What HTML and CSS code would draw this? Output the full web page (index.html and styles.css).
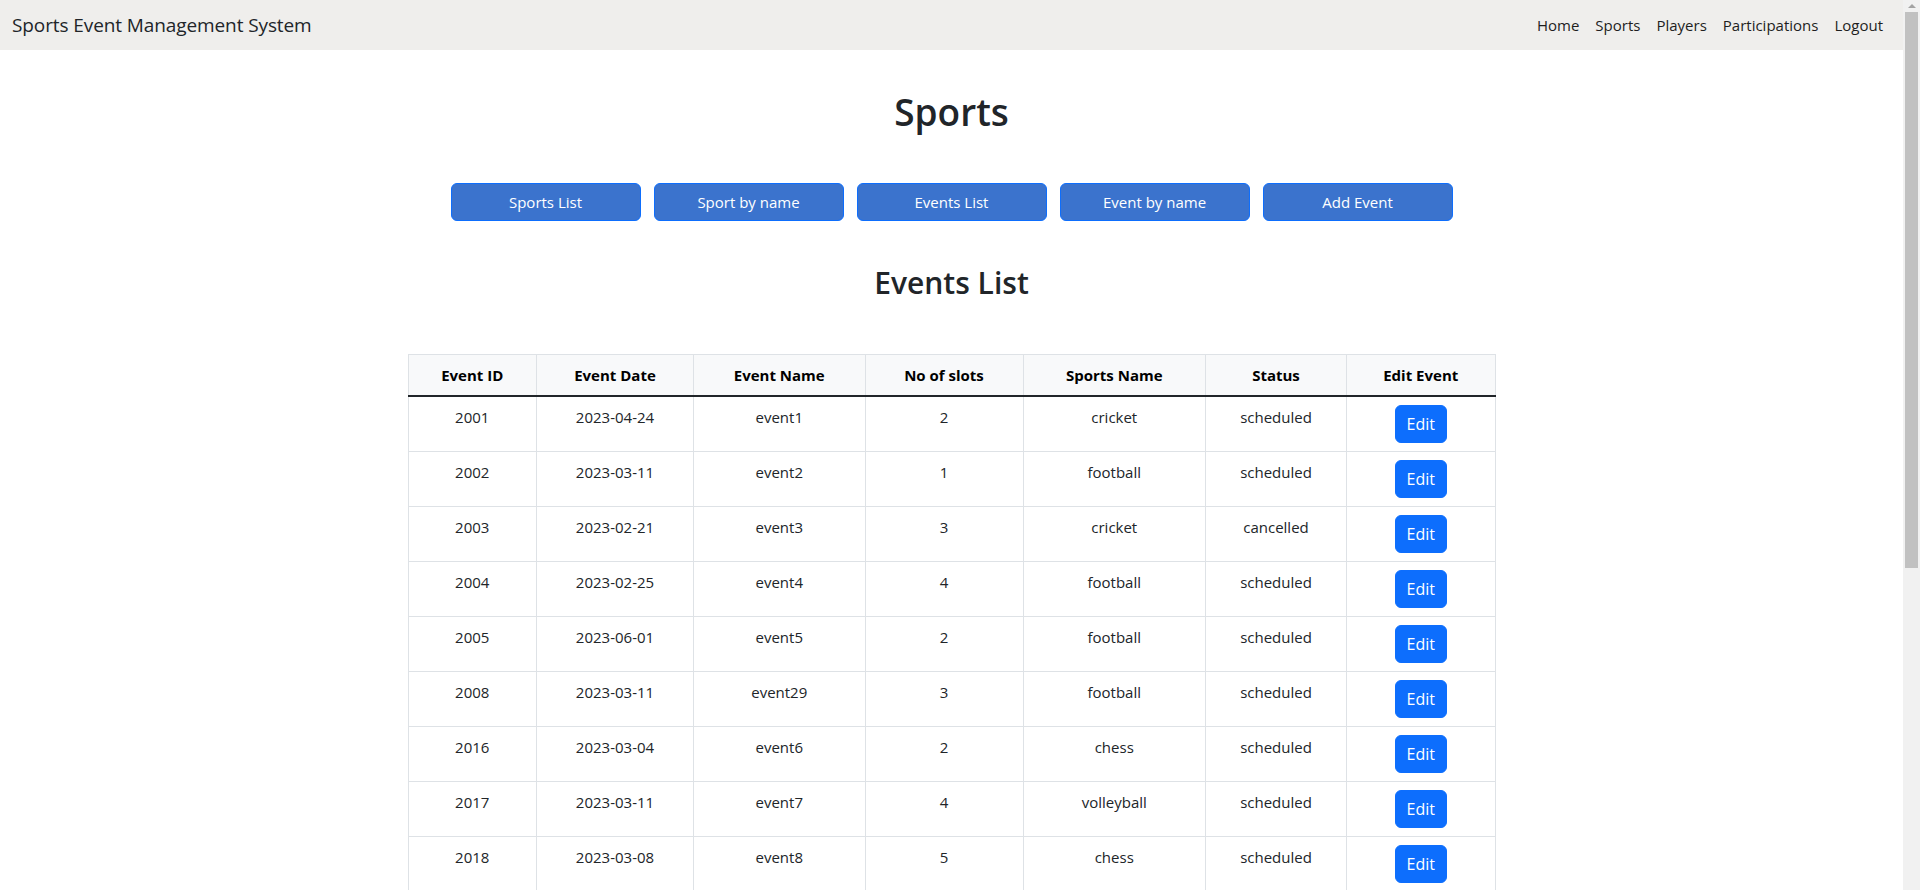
FILE: index.html
```html
<!DOCTYPE html>
<html lang="en">
<head>
<meta charset="utf-8">
<title>Sports Event Management System</title>
<link rel="stylesheet" href="styles.css">
</head>
<body>
<div class="viewport">
  <div class="page">
    <nav class="navbar">
      <span class="brand">Sports Event Management System</span>
      <ul class="nav-links">
        <li><a href="#">Home</a></li>
        <li><a href="#">Sports</a></li>
        <li><a href="#">Players</a></li>
        <li><a href="#">Participations</a></li>
        <li><a href="#">Logout</a></li>
      </ul>
    </nav>
    <main class="content">
      <h1 class="title">Sports</h1>
      <div class="actions">
        <button class="action-btn">Sports List</button>
        <button class="action-btn">Sport by name</button>
        <button class="action-btn">Events List</button>
        <button class="action-btn">Event by name</button>
        <button class="action-btn">Add Event</button>
      </div>
      <h2 class="subtitle">Events List</h2>
      <table class="events">
        <colgroup>
          <col class="c-id"><col class="c-date"><col class="c-name"><col class="c-slots"><col class="c-sport"><col class="c-status"><col class="c-edit">
        </colgroup>
        <thead>
          <tr><th>Event ID</th><th>Event Date</th><th>Event Name</th><th>No of slots</th><th>Sports Name</th><th>Status</th><th>Edit Event</th></tr>
        </thead>
        <tbody>
          <tr><td>2001</td><td>2023-04-24</td><td>event1</td><td>2</td><td>cricket</td><td>scheduled</td><td><button class="edit-btn">Edit</button></td></tr>
          <tr><td>2002</td><td>2023-03-11</td><td>event2</td><td>1</td><td>football</td><td>scheduled</td><td><button class="edit-btn">Edit</button></td></tr>
          <tr><td>2003</td><td>2023-02-21</td><td>event3</td><td>3</td><td>cricket</td><td>cancelled</td><td><button class="edit-btn">Edit</button></td></tr>
          <tr><td>2004</td><td>2023-02-25</td><td>event4</td><td>4</td><td>football</td><td>scheduled</td><td><button class="edit-btn">Edit</button></td></tr>
          <tr><td>2005</td><td>2023-06-01</td><td>event5</td><td>2</td><td>football</td><td>scheduled</td><td><button class="edit-btn">Edit</button></td></tr>
          <tr><td>2008</td><td>2023-03-11</td><td>event29</td><td>3</td><td>football</td><td>scheduled</td><td><button class="edit-btn">Edit</button></td></tr>
          <tr><td>2016</td><td>2023-03-04</td><td>event6</td><td>2</td><td>chess</td><td>scheduled</td><td><button class="edit-btn">Edit</button></td></tr>
          <tr><td>2017</td><td>2023-03-11</td><td>event7</td><td>4</td><td>volleyball</td><td>scheduled</td><td><button class="edit-btn">Edit</button></td></tr>
          <tr><td>2018</td><td>2023-03-08</td><td>event8</td><td>5</td><td>chess</td><td>scheduled</td><td><button class="edit-btn">Edit</button></td></tr>
        </tbody>
      </table>
    </main>
  </div>
  <div class="scrollbar">
    <div class="sb-arrow sb-up"></div>
    <div class="sb-track"><div class="sb-thumb"></div></div>
    <div class="sb-arrow sb-down"></div>
  </div>
</div>
</body>
</html>
```
FILE: styles.css
```css
* { box-sizing: border-box; }
html, body { margin: 0; padding: 0; height: 100%; }
body {
  font-family: "Segoe UI", "Open Sans", "Noto Sans", sans-serif;
  font-size: 16px;
  line-height: 1.5;
  color: #212529;
  background: #fff;
  overflow: hidden;
}
.viewport { display: flex; height: 100vh; }
.page { flex: 1; min-width: 0; overflow: hidden; }

.navbar {
  height: 50px;
  background: #efeeec;
  display: flex;
  align-items: center;
  justify-content: space-between;
  padding: 0 12px 0 12px;
}
.brand { font-size: 19px; line-height: 30px; color: #212529; letter-spacing: -0.1px; }
.nav-links { list-style: none; margin: 0; padding: 0; display: flex; gap: 0; }
.nav-links a {
  display: block;
  padding: 0 8px;
  color: #1e1e1e;
  text-decoration: none;
  font-size: 15px;
  line-height: 24px;
}

.content { padding-top: 38px; }
.title {
  margin: 0;
  text-align: center;
  font-size: 37px;
  font-weight: 600;
  line-height: 48px;
}
.actions {
  margin-top: 47px;
  display: flex;
  justify-content: center;
  gap: 13px;
}
.action-btn {
  width: 190px;
  height: 38px;
  background: #3b73cd;
  border: 1px solid #0d6efd;
  border-radius: 6px;
  color: #fff;
  font-family: inherit;
  font-size: 15px;
}
.subtitle {
  margin: 43px 0 0;
  text-align: center;
  font-size: 30px;
  font-weight: 600;
  line-height: 38px;
}
.events {
  margin: 52px auto 0;
  width: 1087px;
  table-layout: fixed;
  border-collapse: collapse;
  font-size: 15px;
}
.c-id { width: 128.5px; }
.c-date { width: 157px; }
.c-name { width: 171.5px; }
.c-slots { width: 158px; }
.c-sport { width: 182.5px; }
.c-status { width: 141px; }
.c-edit { width: 148.5px; }
.events th, .events td {
  border: 1px solid #dee2e6;
  padding: 8px;
  text-align: center;
  vertical-align: top;
  line-height: 24px;
}
.events th { background: #f8f9fa; font-weight: 700; color: #000; }
.events thead th { border-bottom: 2px solid #212529; }
.events td { color: #212529; }
.edit-btn {
  height: 38px;
  padding: 0 11px;
  background: #0d6efd;
  border: 1px solid #0d6efd;
  border-radius: 6px;
  color: #fff;
  font-family: inherit;
  font-size: 16px;
}

.scrollbar {
  width: 17px;
  flex: none;
  background: #f1f1f1;
  display: flex;
  flex-direction: column;
}
.sb-arrow { height: 12px; flex: none; display: flex; justify-content: center; }
.sb-up::before {
  content: "";
  margin-top: 4px;
  border-left: 4px solid transparent;
  border-right: 4px solid transparent;
  border-bottom: 4px solid #a3a3a3;
  height: 0;
}
.sb-track { flex: 1; padding: 0 2px; }
.sb-thumb { height: 556px; background: #c1c1c1; }
.sb-down { height: 12px; }
```
